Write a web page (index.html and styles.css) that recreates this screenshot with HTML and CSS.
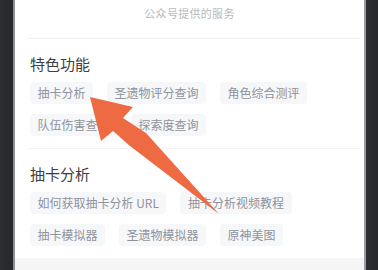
FILE: index.html
```html
<!DOCTYPE html>
<html lang="zh">
<head>
<meta charset="utf-8">
<link rel="stylesheet" href="styles.css">
</head>
<body>
<div class="frame frame-left"></div>
<main class="panel">
  <div class="header">公众号提供的服务</div>
  <div class="divider"></div>
  <section class="section">
    <h2 class="title">特色功能</h2>
    <div class="tags">
      <span class="tag">抽卡分析</span>
      <span class="tag">圣遗物评分查询</span>
      <span class="tag">角色综合测评</span>
      <span class="tag">队伍伤害查询</span>
      <span class="tag">探索度查询</span>
    </div>
  </section>
  <div class="divider"></div>
  <section class="section">
    <h2 class="title">抽卡分析</h2>
    <div class="tags">
      <span class="tag">如何获取抽卡分析 URL</span>
      <span class="tag">抽卡分析视频教程</span>
      <span class="tag">抽卡模拟器</span>
      <span class="tag">圣遗物模拟器</span>
      <span class="tag">原神美图</span>
    </div>
  </section>
  <div class="footer"></div>
</main>
<div class="frame frame-right"></div>
<svg class="arrow" width="378" height="270" viewBox="0 0 378 270">
  <polygon points="90,97 133,107 123,118 146,133 219,214 130,146 113,131 101,141" fill="#ee6a43"/>
</svg>
</body>
</html>
```

FILE: styles.css
```css
html, body {
  margin: 0;
  padding: 0;
}
body {
  width: 378px;
  height: 270px;
  overflow: hidden;
  display: flex;
  background: #2a2b2e;
  font-family: "Noto Sans CJK SC", "Noto Sans", sans-serif;
  position: relative;
}
.frame {
  width: 13px;
  background: linear-gradient(90deg, #2c2e31, #26282b);
}
.frame-left {
  border-right: 2px solid #8d9093;
}
.frame-right {
  width: 12px;
  border-left: 2px solid #9a9c9f;
}
.panel {
  flex: 1;
  background: #ffffff;
  display: flex;
  flex-direction: column;
}
.header {
  padding-top: 5px;
  height: 18px;
  line-height: 16px;
  font-size: 11px;
  color: #b8b8b8;
  text-align: center;
  letter-spacing: 0.3px;
}
.divider {
  height: 1px;
  background: #f2f2f3;
  margin: 15px 4px 0 13px;
}
.section {
  padding: 15px 0 12px 15px;
}
.section + .divider {
  margin-top: 0;
}
.title {
  margin: 0;
  font-size: 15px;
  line-height: 20px;
  font-weight: 400;
  color: #3d3d3f;
}
.tags {
  margin-top: 8px;
  display: flex;
  flex-wrap: wrap;
  column-gap: 14px;
  row-gap: 10px;
  padding-right: 20px;
}
.tag {
  height: 22px;
  line-height: 22px;
  padding: 0 7.5px;
  font-size: 12px;
  color: #8f939d;
  background: #f6f7f9;
  border-radius: 4px;
  white-space: nowrap;
}
.footer {
  flex: 1;
  background: #f5f5f6;
}
.arrow {
  position: absolute;
  left: 0;
  top: 0;
  pointer-events: none;
}
```
